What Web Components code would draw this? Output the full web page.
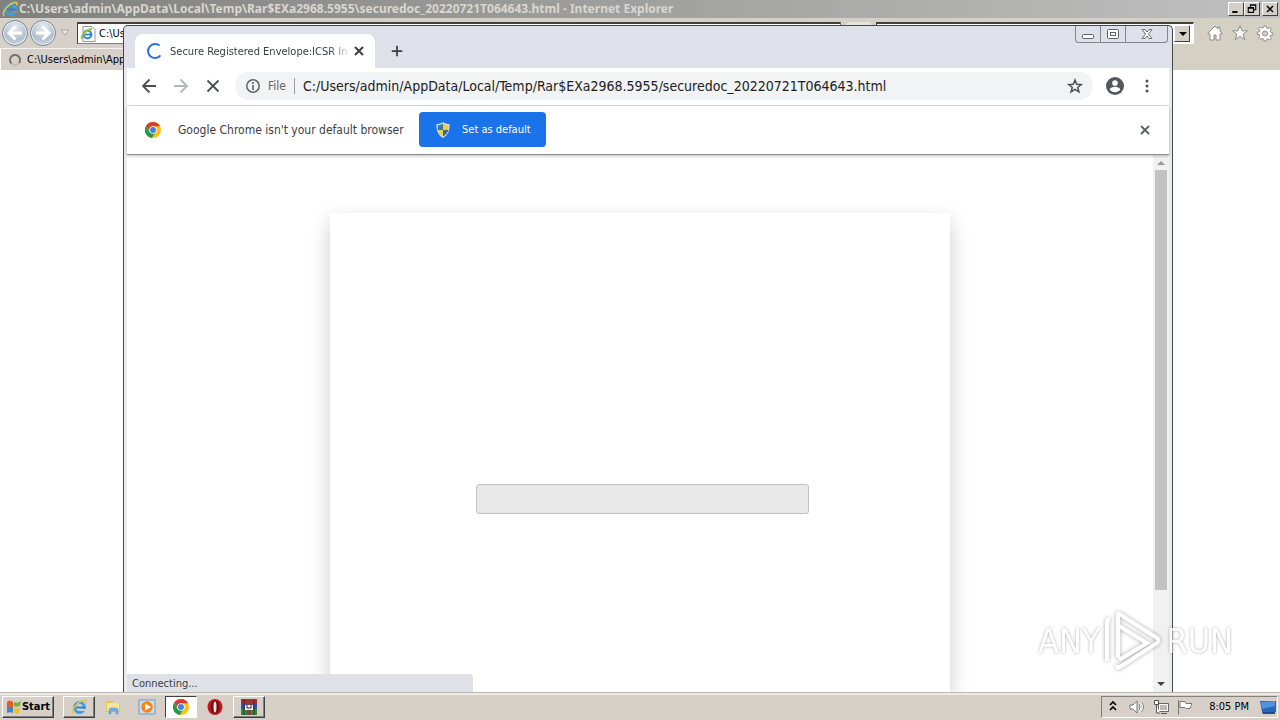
<!DOCTYPE html>
<html lang="en">
<head>
<meta charset="utf-8">
<title>Desktop</title>
<style>
html, body { margin: 0; height: 100%; overflow: hidden; }
body { font-family: "DejaVu Sans Condensed", "DejaVu Sans", sans-serif; font-size: 12px; color: #000; }
</style>
</head>
<body>
<desk-top></desk-top>
<script>
const define = (name, css, html) => {
  const template = document.createElement('template');
  template.innerHTML = `<style>*{box-sizing:border-box}button{font:inherit;color:inherit;border:0;padding:0;margin:0;background:none}svg{display:block;flex:none}${css}</style>${html}`;
  customElements.define(name, class extends HTMLElement {
    constructor() {
      super();
      this.attachShadow({ mode: 'open' }).append(template.content.cloneNode(true));
    }
  });
};

const ICONS = {
  ie: '<circle cx="8.500" cy="8.500" r="5" fill="none" stroke="#3aa0e0" stroke-width="3"/><path d="M5 8.500h9" stroke="#2b86cf" stroke-width="2"/><path d="M10 10h5v2h-5z" fill="var(--gap,#8c8c8a)"/><path d="M2 15C-1 11 8 1 14 1.500c1.500.2 1 2 .5 3" fill="none" stroke="#e8c63a" stroke-width="1.500"/>',
  page: '<path d="M3 .5h9l3 3v12H3z" fill="#fff" stroke="#999"/><circle cx="7.500" cy="8.500" r="3.800" fill="none" stroke="#2f95dc" stroke-width="2.200"/><path d="M5 8.500h7" stroke="#2476c4" stroke-width="1.600"/><path d="M2 13C0 10 7 3 12 3" fill="none" stroke="#9fc52e" stroke-width="1.800"/>',
  ring: '<circle cx="8" cy="8" r="5" fill="none" stroke="#c0bcb6" stroke-width="2"/><path d="M4.500 11.500A5 5 0 1 1 12 11" fill="none" stroke="#75726e" stroke-width="2"/>',
  spin: '<path d="M12.500 2.600A7 7 0 1 0 13.500 12.400" fill="none" stroke="#2a72d8" stroke-width="2"/>',
  house: '<path d="M8 1 1 8v1h2v6h4v-5h2v5h4V9h2V8l-2-2V2h-2v2z" fill="#fff" stroke="#918d87"/>',
  bstar: '<path d="m8 .8 2 5h5.400l-4.300 3.400 1.700 5.400L8 11.400l-4.800 3.200 1.700-5.400L.6 5.800H6z" fill="#fff" stroke="#918d87"/>',
  gear: '<path d="m7 1h2l.5 2 1.500.6 1.800-1.100 1.500 1.500-1.100 1.800.6 1.500 2 .5v2l-2 .4-.7 1.500 1.200 1.800-1.500 1.500-1.800-1.100-1.500.6L9 16H7l-.5-2-1.500-.6L3.200 14.500 1.700 13l1.100-1.800L2.200 9.700l-2-.4v-2l2-.5.6-1.500L1.700 3.500 3.200 2 5 3.100l1.500-.6z" fill="#fff" stroke="#918d87"/><circle cx="8" cy="8.500" r="2.500" fill="#d4d0c8" stroke="#918d87"/>',
  x: '<path d="m4 4 8 8m0-8-8 8" stroke="currentColor" stroke-width="2"/>',
  stop: '<path d="m2.500 2.500 11 11m0-11-11 11" stroke="currentColor" stroke-width="1.800"/>',
  plus: '<path d="M8 2v12M2 8h12" stroke="#3c4043" stroke-width="2"/>',
  back: '<path d="M15 8H2m6.500-6.500L2 8l6.500 6.500" fill="none" stroke="currentColor" stroke-width="var(--weight,1.800)"/>',
  next: '<path d="M1 8h13M7.500 1.500 14 8l-6.500 6.500" fill="none" stroke="currentColor" stroke-width="var(--weight,1.800)"/>',
  info: '<circle cx="8" cy="8" r="6.200" fill="none" stroke="#5f6368" stroke-width="1.500"/><path d="M8 7v5M8 4v2" stroke="#5f6368" stroke-width="1.600"/>',
  star: '<path d="m8 2 1.700 4.200 4.500.3-3.500 2.900 1.200 4.400L8 11.300l-3.900 2.500 1.200-4.400-3.500-2.900 4.500-.3z" fill="none" stroke="#4c5055" stroke-width="1.500"/>',
  user: '<circle cx="8" cy="8" r="8" fill="#54575c"/><circle cx="8" cy="5.300" r="2.500" fill="#fff"/><path d="M3.300 11c1-3 8.400-3 9.400 0-2 3.300-7.400 3.300-9.400 0z" fill="#fff"/>',
  dots: '<g fill="#4c5055"><circle cx="8" cy="3" r="1.500"/><circle cx="8" cy="8" r="1.500"/><circle cx="8" cy="13" r="1.500"/></g>',
  chrome: '<circle cx="8" cy="8" r="8" fill="#fbc116"/><path d="M8 4.300h7.100A8 8 0 0 0 1 4l3.800 5z" fill="#d93a35"/><path d="M1 4a8 8 0 0 0 5.800 12L10 10.800 8 8 4.600 9.800z" fill="#229a50"/><circle cx="8" cy="8" r="3.800" fill="#fff"/><circle cx="8" cy="8" r="3" fill="#4180e0"/>',
  shield: '<path d="M8 0c2 1.500 4 2 6.500 2C15 8 13 13 8 16 3 13 1 8 1.500 2 4 2 6 1.500 8 0z" fill="#d5dde0"/><path d="M8 1.500V8H2.800V3.200C5 3 6.500 2.500 8 1.500z" fill="#3877b8"/><path d="M8 1.500C9.500 2.500 11 3 13.200 3.200V8H8z" fill="#f1cf2f"/><path d="M2.800 8H8v6.500C5 12.500 3.200 10.500 2.800 8z" fill="#e8d52f"/><path d="M8 8h5.200c-.4 2.500-2.200 4.500-5.200 6.500z" fill="#3468a0"/>',
  down: '<path d="M4 6h8l-4 4z" fill="currentColor"/>',
  up: '<path d="M4 10h8L8 6z" fill="currentColor"/>',
  min: '<path d="M3 12h7" stroke="#000" stroke-width="2.500"/>',
  restore: '<path d="M6 6V2.500h7V9h-3M6 3h7" fill="none" stroke="#000" stroke-width="1.500"/><path d="M3 6h7v6.500H3zM3 7h7" fill="none" stroke="#000" stroke-width="1.500"/>',
  cmin: '<rect x="2.500" y="8.500" width="11" height="4" rx="1" fill="#fff" stroke="#5d6269"/>',
  cmax: '<rect x="2.500" y="3.500" width="11" height="9" rx="1" fill="#fff" stroke="#5d6269"/><rect x="5.500" y="6.500" width="5" height="3" fill="none" stroke="#5d6269"/>',
  cclose: '<path d="M3 3.500h3l2 2.500 2-2.500h3L9.500 8l3.500 4.500h-3L8 10l-2 2.500H3L6.500 8z" fill="#fff" stroke="#5d6269" stroke-width=".9"/>',
  flag: '<path d="M1 3c2-2 4-1 6 0V12c-2-1-4-1-6 1z" fill="#e85a24"/><path d="M8 3c2 1 4 1 7-1l-1 5c-2 1-4 1-6 0z" fill="#71b43c"/><path d="M1 9c2-1 4-1 6 0v5c-2-1-4-1-6 0z" fill="#3b83d5"/><path d="M8 9c2 1 4 1 6 0l-1 5c-2 1-4 0-5 0z" fill="#f4bd2b"/>',
  folder: '<path d="M1 2h6l1 2h7v9H1z" fill="#e4c45b"/><path d="M2 4h12v8H2z" fill="#f6e49b"/><path d="M4 15v-4q0-2 2-2h5q2 0 2 2v4h-2v-3H6v3z" fill="#68b4df" stroke="#4a91bd" stroke-width=".5"/>',
  player: '<path d="M0 1h16v14H0z" fill="#c8e0f2" stroke="#7398b8"/><circle cx="8" cy="8" r="5.800" fill="#f58517"/><path d="m6 4.500 6 3.500-6 3.500z" fill="#fff"/>',
  opera: '<ellipse cx="8" cy="8" rx="7.500" ry="8" fill="#c01a20"/><ellipse cx="8" cy="8" rx="4.500" ry="6.800" fill="#7a080c"/><ellipse cx="8" cy="8" rx="1.500" ry="5.500" fill="#f3e6e4"/>',
  rar: '<path d="M0 0h16v5H0z" fill="#b12c32"/><path d="M0 5h16v5H0z" fill="#3350a8"/><path d="M0 10h16v6H0z" fill="#2f8b3c"/><path d="M6 0h4v16H6z" fill="#8c3d35"/><path d="M3 0v16M13 0v16" stroke="#4a2434"/><path d="M4 6h8v5H4z" fill="#eee"/><path d="M6 6v3h4V6" fill="none" stroke="#333"/>',
  chevs: '<path d="m5 6 3-3 3 3M5 11l3-3 3 3" fill="none" stroke="#000" stroke-width="1.700"/>',
  sound: '<path d="M1 6h3l4-4v12l-4-4H1z" fill="#fff" stroke="#777"/><path d="M10 5q2 3 0 6M12 3q4 5 0 10" fill="none" stroke="#fff" stroke-width="2"/><path d="M10 5q2 3 0 6M12.500 3q4 5 0 10" fill="none" stroke="#777"/>',
  net: '<path d="M5.500 4.500h10v8h-10z" fill="#bcbab4" stroke="#666"/><path d="M6.500 5.500h8v6h-8z" fill="none" stroke="#fff"/><path d="M8 14.500h6M1.500 1.500h4v4h-4zM3.500 6v8H7" fill="#fff" stroke="#555"/>',
  pennant: '<path d="M1.500 1v14.500M3 2.500h5l1 2h6l-2 5H9l-1-1H3z" fill="#fff" stroke="#777"/>',
  show: '<path d="M0 2h16v11H2z" fill="#2a63b8"/><path d="m1 3 14-1v5L2 10z" fill="#4f92df"/><path d="M2 13h13v2H3z" fill="#1f4c91"/>'
};

customElements.define('ui-icon', class extends HTMLElement {
  connectedCallback() {
    if (this.shadowRoot) return;
    this.attachShadow({ mode: 'open' }).innerHTML =
      `<style>:host{display:block;flex:none;width:16px;height:16px}svg{display:block;width:100%;height:100%;overflow:visible}</style>
       <svg viewBox="0 0 16 16" aria-hidden="true">${ICONS[this.getAttribute('name')]}</svg>`;
  }
});

define('ie-window', `
:host{display:grid;grid-template-rows:18px 30px 22px 1fr;background:#fff;min-width:0}
header{display:flex;align-items:center;gap:1px;padding:0 2px;background:linear-gradient(90deg,#80807e,#c0c0c0);color:#d9d6d0;font:bold 12px/18px "Noto Sans",sans-serif}
h1{font:inherit;margin:0;flex:1;white-space:nowrap}
.cap{display:flex;color:#000}
.cap button{width:16px;height:14px;display:grid;place-items:center;background:#d4d0c8;border:1px solid;border-color:#fff #404040 #404040 #fff}
.cap ui-icon{width:12px;height:12px}
.cap .close{margin-left:2px}
nav,.tabs{background:linear-gradient(90deg,#d6d0c9,#d4d0c4)}
nav{display:flex;align-items:center;padding:0 7px 0 2px}
.round{width:26px;height:26px;border-radius:50%;display:grid;place-items:center;color:#fff;background:radial-gradient(circle at 50% 25%,#e4ebf2,#b2bfcc 60%,#dff6ff);border:1px solid #778896;box-shadow:inset 0 0 0 1px #eef3f7;--weight:3}
.round+.round{margin-left:2px}
.caret{margin:0 6px 0 3px}
.field{display:flex;align-items:center;gap:3px;height:22px;background:#fff;border:1px solid #808080;border-top:2px solid #404040;border-left-color:#404040;padding-left:2px}
.addr{flex:1}
input{flex:1;min-width:0;border:0;padding:0;font:inherit;color:#000;background:none;outline:0}
.addr input{font-size:11px}
.extra{width:35px;height:22px;display:flex;justify-content:center}
.extra i{width:25px;background:#e6e4df;border-radius:4px}
.search{width:318px;padding-right:3px;border-color:#404040 #fff #fff #404040}
.search button{width:16px;height:17px;background:#d4d0c8;border:1px solid;border-color:#fff #404040 #404040 #fff;display:grid;place-items:center}
.tools{display:flex;gap:9px;padding-left:13px}
.tabs{display:flex}
.tab{display:flex;align-items:center;gap:4px;padding-left:6px;width:260px;border-top:1px solid #f6f4f0;border-left:1px solid #fff;white-space:nowrap;overflow:hidden;font-size:11px}
`, `
<header><ui-icon name="ie"></ui-icon><h1>C:\\Users\\admin\\AppData\\Local\\Temp\\Rar$EXa2968.5955\\securedoc_20220721T064643.html - Internet Explorer</h1>
<div class="cap"><button aria-label="Minimize"><ui-icon name="min"></ui-icon></button><button aria-label="Restore"><ui-icon name="restore"></ui-icon></button><button class="close" aria-label="Close"><ui-icon name="x"></ui-icon></button></div></header>
<nav><button class="round" aria-label="Back"><ui-icon name="back"></ui-icon></button><button class="round" aria-label="Forward"><ui-icon name="next"></ui-icon></button><svg class="caret" width="12" height="8"><path d="M2 1h8L6 6z" fill="#ebe8e2" stroke="#aaa69f"/></svg>
<div class="field addr"><ui-icon name="page"></ui-icon><input aria-label="Address" value="C:\\Us"></div><div class="extra"><i></i></div>
<div class="field search"><input aria-label="Search"><button aria-label="Search options"><ui-icon name="down"></ui-icon></button></div>
<div class="tools"><button aria-label="Home"><ui-icon name="house"></ui-icon></button><button aria-label="Favorites"><ui-icon name="bstar"></ui-icon></button><button aria-label="Tools"><ui-icon name="gear"></ui-icon></button></div></nav>
<div class="tabs"><div class="tab"><ui-icon name="ring"></ui-icon><span>C:\\Users\\admin\\App</span></div></div><main></main>`);

define('chrome-tabs', `
:host{display:flex;justify-content:space-between;background:#dee1e9}
.strip{display:flex;align-items:flex-end}
.tab{display:flex;align-items:center;width:240px;height:34px;margin-left:8px;padding:0 8px 0 12px;background:#fff;border-radius:8px 8px 0 0;font-size:11px;color:#3c4043}
.tab span{flex:1;min-width:0;white-space:nowrap;overflow:hidden;margin-left:7px;-webkit-mask-image:linear-gradient(90deg,#000 88%,transparent)}
.add{height:34px;margin-left:15px}
.add ui-icon{width:14px;height:14px}
.win{display:flex;height:17px;margin-right:1px;border:1px solid #83878f;border-top:0;border-radius:0 0 4px 4px}
.win button{width:25px;display:grid;place-items:center;border-right:1px solid #83878f}
.win button:last-child{width:41px;border:0}`, `
<div class="strip"><div class="tab"><ui-icon name="spin"></ui-icon><span>Secure Registered Envelope:ICSR In</span><button aria-label="Close tab"><ui-icon name="x"></ui-icon></button></div><button class="add" aria-label="New tab"><ui-icon name="plus"></ui-icon></button></div>
<div class="win"><button aria-label="Minimize"><ui-icon name="cmin"></ui-icon></button><button aria-label="Maximize"><ui-icon name="cmax"></ui-icon></button><button aria-label="Close"><ui-icon name="cclose"></ui-icon></button></div>`);

define('chrome-toolbar', `
:host{display:flex;align-items:center;gap:16px;padding:0 14px 1px;background:#fff;border-bottom:1px solid #dadce0;color:#4c5055}
.off{color:#b4b6b9}
.box{flex:1;display:flex;align-items:center;height:28px;margin-left:-2px;padding:0 10px;border-radius:14px;background:#f1f3f4;color:#5f6368}
.box label{width:33px;padding-left:7px}
.box input{flex:1;min-width:0;border:0;border-left:1px solid #9aa0a6;padding:0 0 0 8px;height:16px;background:none;outline:0;font:inherit;font-size:14px;color:#202124}
.user{margin:0 -1px 0 -3px}
.user ui-icon{width:18px;height:18px}`, `
<button aria-label="Back"><ui-icon name="back"></ui-icon></button><button class="off" aria-label="Forward"><ui-icon name="next"></ui-icon></button><button aria-label="Stop"><ui-icon name="stop"></ui-icon></button>
<div class="box"><ui-icon name="info"></ui-icon><label for="url">File</label><input id="url" value="C:/Users/admin/AppData/Local/Temp/Rar$EXa2968.5955/securedoc_20220721T064643.html"><button aria-label="Bookmark"><ui-icon name="star"></ui-icon></button></div>
<button class="user" aria-label="Profile"><ui-icon name="user"></ui-icon></button><button aria-label="Menu"><ui-icon name="dots"></ui-icon></button>`);

define('info-bar', `
:host{display:flex;align-items:center;padding:0 16px 1px 18px;background:#fff;color:#3c4043;border-bottom:1px solid #8e8e8e;box-shadow:0 1px 3px #0004;position:relative;z-index:1}
span{width:241px;margin-left:17px;white-space:nowrap}
.set{display:flex;align-items:center;gap:11px;width:127px;height:35px;padding-left:16px;background:#1a73e8;border-radius:4px;color:#fff;font-size:11px}
.x{margin-left:auto;color:#5f6368}`, `
<ui-icon name="chrome"></ui-icon><span>Google Chrome isn't your default browser</span><button class="set"><ui-icon name="shield"></ui-icon>Set as default</button><button class="x" aria-label="Dismiss"><ui-icon name="x"></ui-icon></button>`);

define('web-page', `
:host{display:grid;grid-template-columns:1fr 16px;min-height:0;background:#fff;position:relative}
.view{overflow:hidden;display:flex;justify-content:center;padding-top:58px}
.card{width:620px;max-width:100%;padding:271px 0 0 5px;box-shadow:0 8px 20px #0003;background:#fff;display:flex;justify-content:center;align-items:flex-start}
.load{width:333px;height:30px;border:1px solid #c3c3c3;border-radius:3px;background:#e8e8e8}
.bar{display:grid;grid-template-rows:15px 1fr 16px;justify-items:center;background:#f1f1f1;color:#444}
.bar ui-icon:first-child{color:#999}
.thumb{width:12px;height:83%;background:#c1c1c1}
.status{position:absolute;left:0;bottom:0;width:346px;height:18px;padding-left:5px;background:#dee1e6;border-radius:0 4px 0 0;font-size:11px;line-height:20px;color:#3c4043}`, `
<div class="view"><div class="card"><div class="load" role="progressbar" aria-label="Loading"></div></div></div>
<div class="bar"><ui-icon name="up"></ui-icon><div class="thumb"></div><ui-icon name="down"></ui-icon></div><div class="status">Connecting...</div>`);

define('chrome-window', `
:host{display:grid;grid-template-rows:42px 38px 49px 1fr;border:1px solid #45484d;border-bottom:0;border-radius:5px 5px 0 0;padding:0 3px;background:linear-gradient(#dee1e9 42px,#e9ebee 42px);overflow:hidden}`,
`<chrome-tabs></chrome-tabs><chrome-toolbar></chrome-toolbar><info-bar></info-bar><web-page></web-page>`);

define('any-mark', `
:host{display:flex;align-items:center;gap:4px;color:#fff;font-size:34px;line-height:44px;text-shadow:0 0 3px #0006;opacity:.85;pointer-events:none}
svg{filter:drop-shadow(0 0 2px #0006)}`, `
<span>ANY</span><svg width="58" height="64" viewBox="0 0 58 64"><path d="M14 3v46M14 4l39 25q3 2 0 5L16 58q-3 2-3-2M6 10q-3 0-3 4v38M15 17l28 17-28 17" fill="none" stroke="#fff" stroke-width="4"/></svg><span>RUN</span>`);

define('task-bar', `
:host{display:flex;align-items:center;gap:9px;padding:0 2px;background:#d6d0c9;border-top:1px solid #b8b8ae;box-shadow:inset 0 2px #eeeae4}
button{display:flex;align-items:center;justify-content:center;height:22px;width:32px}
.up{border:1px solid;border-color:#fff #404040 #404040 #fff;box-shadow:inset -1px -1px #808080}
.start{width:52px;font-weight:bold;font-size:11px}
.apps{display:flex;gap:2px;--gap:#d6d0c9}
.on{background:#fff;border:1px solid;border-color:#404040 #fff #fff #404040}
.tray{margin-left:auto;display:flex;align-items:center;gap:8px;height:22px;padding:0 1px 0 3px;border:1px solid;border-color:#808080 #fff #fff #808080;font-size:11px;white-space:nowrap}
time{margin:0 3px 0 8px}`, `
<button class="up start"><ui-icon name="flag"></ui-icon>Start</button>
<div class="apps"><button class="up" aria-label="Internet Explorer"><ui-icon name="ie"></ui-icon></button><button aria-label="Explorer"><ui-icon name="folder"></ui-icon></button><button aria-label="Media Player"><ui-icon name="player"></ui-icon></button><button class="on" aria-label="Chrome"><ui-icon name="chrome"></ui-icon></button><button aria-label="Opera"><ui-icon name="opera"></ui-icon></button><button class="up" aria-label="WinRAR"><ui-icon name="rar"></ui-icon></button></div>
<div class="tray"><ui-icon name="chevs"></ui-icon><ui-icon name="sound"></ui-icon><ui-icon name="net"></ui-icon><ui-icon name="pennant"></ui-icon><time>8:05 PM</time><ui-icon name="show"></ui-icon></div>`);

define('desk-top', `
:host{display:grid;grid-template-rows:1fr 28px;height:100vh;position:relative}
.area{position:relative;display:grid;min-height:0}
chrome-window{position:absolute;inset:25px 107px 0 123px}
any-mark{position:absolute;right:47px;bottom:47px}`, `
<div class="area"><ie-window></ie-window><chrome-window></chrome-window></div><task-bar></task-bar><any-mark></any-mark>`);
</script>
</body>
</html>
